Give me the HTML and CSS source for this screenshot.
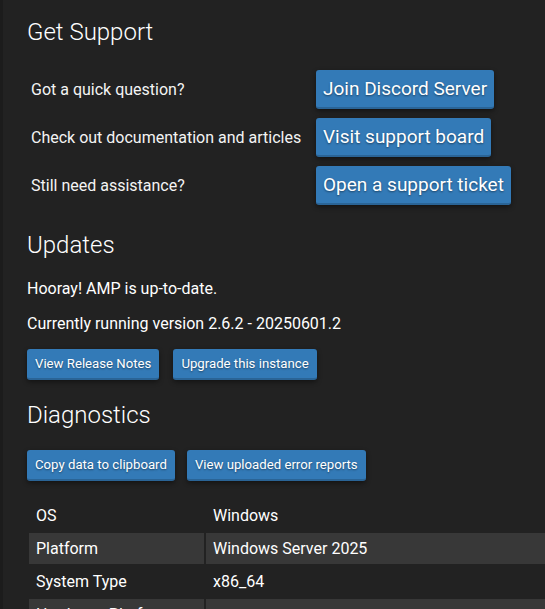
FILE: index.html
```html
<!DOCTYPE html>
<html>
<head>
  <title>Support</title>
  <link rel="stylesheet" href="styles.css">
</head>
<body>
  <div class="panel">
    <h2 class="section-title">Get Support</h2>
    <div class="support-grid">
      <div class="support-label">Got a quick question?</div>
      <div><span class="button big">Join Discord Server</span></div>
      <div class="support-label">Check out documentation and articles</div>
      <div><span class="button big">Visit support board</span></div>
      <div class="support-label">Still need assistance?</div>
      <div><span class="button big">Open a support ticket</span></div>
    </div>

    <h2 class="section-title updates">Updates</h2>
    <p class="info">Hooray! AMP is up-to-date.</p>
    <p class="info">Currently running version 2.6.2 - 20250601.2</p>
    <div class="buttons">
      <span class="button small">View Release Notes</span>
      <span class="button small">Upgrade this instance</span>
    </div>

    <h2 class="section-title diagnostics">Diagnostics</h2>
    <div class="buttons diag-buttons">
      <span class="button small">Copy data to clipboard</span>
      <span class="button small">View uploaded error reports</span>
    </div>
    <table class="diag-table">
      <tr><td>OS</td><td>Windows</td></tr>
      <tr><td>Platform</td><td>Windows Server 2025</td></tr>
      <tr><td>System Type</td><td>x86_64</td></tr>
      <tr><td>Hardware Platform</td><td></td></tr>
    </table>
  </div>
</body>
</html>
```

FILE: styles.css
```css
body {
  margin: 0;
  background-color: #1c1c1c;
  color: #fff;
  font-family: Roboto, "Liberation Sans", sans-serif;
  overflow: hidden;
}

.panel {
  margin-left: 3px;
  background-color: #222;
  padding: 18px 0 0 24px;
  min-height: 100vh;
  overflow: hidden;
}

.section-title {
  margin: 0 0 24px;
  font-size: 24px;
  line-height: 28px;
  font-weight: 300;
  color: #fff;
}

.support-grid {
  display: grid;
  grid-template-columns: 289px auto;
  row-gap: 9px;
  align-items: center;
}

.support-label {
  padding-left: 4px;
  font-size: 16px;
  color: #f4f4f4;
}

.button {
  display: inline-block;
  background-color: #337ab7;
  color: #fff;
  border-radius: 3px;
  border-bottom: 2px solid #2a6496;
  box-shadow: 0 2px 5px rgba(0, 0, 0, 0.45);
  text-shadow: 0 1px 2px rgba(0, 0, 0, 0.45);
  white-space: nowrap;
}

.button.big {
  font-size: 19px;
  line-height: 37px;
  padding: 0 7px;
}

.button.small {
  font-size: 13.2px;
  line-height: 29px;
  padding: 0 8px;
}

.updates {
  margin-top: 26px;
  margin-bottom: 19px;
}

.info {
  margin: 0 0 13px;
  font-size: 16px;
  line-height: 22px;
}

.buttons {
  display: flex;
  gap: 14px;
  margin-top: 14px;
}

.diagnostics {
  margin-top: 21px;
  margin-bottom: 21px;
}

.diag-buttons {
  margin-top: 0;
  gap: 12px;
}

.diag-table {
  margin-top: 17px;
  width: 700px;
  border-spacing: 2px;
  font-size: 16px;
}

.diag-table td {
  height: 31px;
  padding: 0 7px;
  line-height: 31px;
}

.diag-table td:first-child {
  width: 161px;
}

.diag-table tr:nth-child(even) td {
  background-color: #383838;
}
```
